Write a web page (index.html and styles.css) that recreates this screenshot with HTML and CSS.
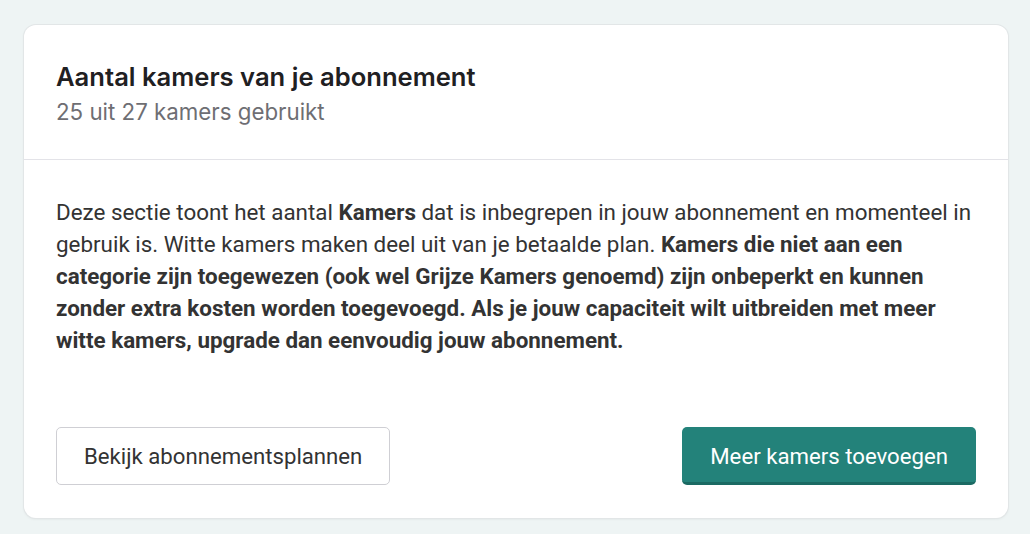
FILE: index.html
```html
<!DOCTYPE html>
<html lang="nl">
<head>
<meta charset="utf-8">
<link rel="stylesheet" href="styles.css">
</head>
<body>
<section class="card">
  <header class="card-header">
    <h2 class="title">Aantal kamers van je abonnement</h2>
    <p class="subtitle">25 uit 27 kamers gebruikt</p>
  </header>
  <div class="card-body">
    <p class="text">Deze sectie toont het aantal <strong>Kamers</strong> dat is inbegrepen in jouw abonnement en momenteel in gebruik is. Witte kamers maken deel uit van je betaalde plan. <strong>Kamers die niet aan een categorie zijn toegewezen (ook wel Grijze Kamers genoemd) zijn onbeperkt en kunnen zonder extra kosten worden toegevoegd. Als je jouw capaciteit wilt uitbreiden met meer witte kamers, upgrade dan eenvoudig jouw abonnement.</strong></p>
    <div class="actions">
      <button class="btn btn-secondary">Bekijk abonnementsplannen</button>
      <button class="btn btn-primary">Meer kamers toevoegen</button>
    </div>
  </div>
</section>
</body>
</html>
```
FILE: styles.css
```css
* { box-sizing: border-box; }
html, body { margin: 0; }
body {
  background: #eef4f4;
  padding: 25px 22px 16px 24px;
  font-family: Roboto, "Liberation Sans", sans-serif;
}
.card {
  width: 984px;
  background: #fff;
  border-radius: 12px;
  box-shadow: 0 0 0 1px #e2e6e7, 0 1px 3px rgba(0,0,0,0.08);
}
.card-header {
  padding: 36px 32px 0 32px;
  height: 135px;
  border-bottom: 1px solid #e3e3e8;
}
.title {
  margin: 0;
  font-family: Inter, "Noto Sans", sans-serif;
  font-weight: 600;
  font-size: 25.6px;
  line-height: 32px;
  color: #1f2022;
}
.subtitle {
  margin: 5px 0 0;
  font-family: Inter, "Noto Sans", sans-serif;
  font-size: 22.3px;
  line-height: 28px;
  color: #6e6e73;
}
.card-body {
  padding: 36px 32px 33px 32px;
}
.text {
  margin: 0;
  font-size: 22.4px;
  line-height: 32px;
  color: #333;
}
.text strong { font-weight: 700; }
.actions {
  display: flex;
  justify-content: space-between;
  margin-top: 71px;
}
.btn {
  height: 58px;
  padding: 0 27px;
  font-family: Roboto, "Liberation Sans", sans-serif;
  font-size: 22.2px;
  border-radius: 5px;
  cursor: pointer;
}
.btn-secondary {
  background: #fff;
  color: #333;
  border: 1px solid #cfcfd4;
}
.btn-primary {
  background: #23827a;
  color: #fff;
  border: none;
  border-bottom: 3px solid #1b6a63;
  padding-top: 3px;
  padding-left: 28px;
  padding-right: 28px;
}
```
